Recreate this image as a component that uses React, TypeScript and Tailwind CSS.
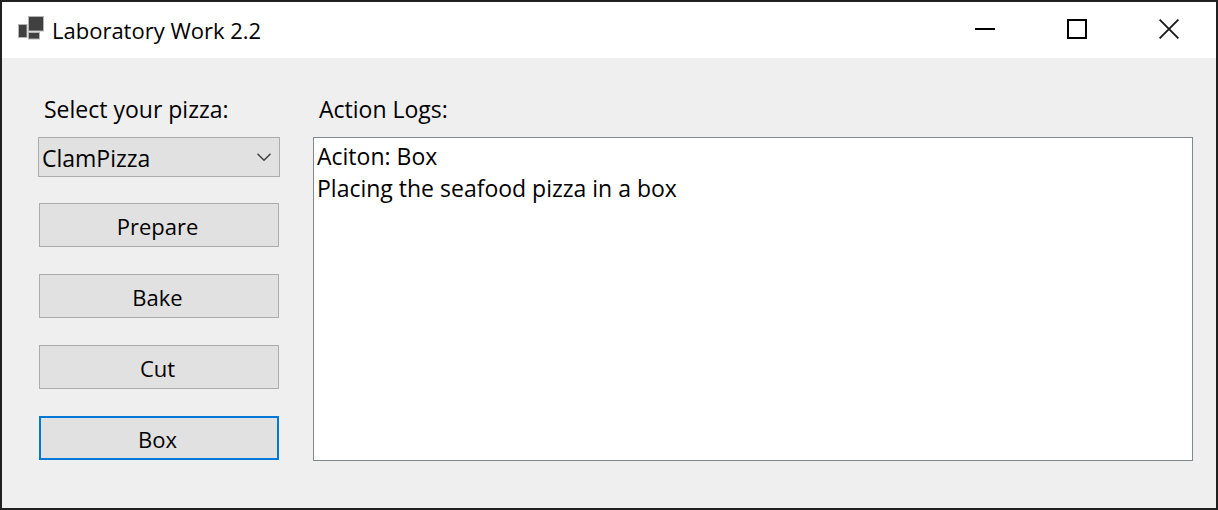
import { useState } from "react";

const actions = ["Prepare", "Bake", "Cut", "Box"] as const;
type Action = (typeof actions)[number];

const pizzas = [
  { name: "ClamPizza", kind: "seafood" },
  { name: "CheesePizza", kind: "cheese" },
  { name: "VeggiePizza", kind: "veggie" },
  { name: "PepperoniPizza", kind: "pepperoni" },
];

function describe(action: Action, kind: string) {
  switch (action) {
    case "Prepare":
      return `Preparing the ${kind} pizza`;
    case "Bake":
      return `Baking the ${kind} pizza`;
    case "Cut":
      return `Cutting the ${kind} pizza`;
    case "Box":
      return `Placing the ${kind} pizza in a box`;
  }
}

function AppIcon() {
  return (
    <svg width="26" height="24" viewBox="0 0 26 24" className="mb-1" aria-hidden="true">
      <g fill="#404040" stroke="#b4b4b4" strokeWidth="1">
        <rect x="10.5" y="0.5" width="15" height="14.5" />
        <rect x="0.5" y="8.5" width="8.5" height="13" />
        <rect x="10.5" y="16.5" width="11" height="6.5" />
      </g>
    </svg>
  );
}

function TitleBar() {
  const control = "flex h-14 w-[92px] items-center justify-center pb-0.5 hover:bg-[#e5e5e5]";
  return (
    <header className="flex h-14 items-center bg-white pr-px pl-4">
      <AppIcon />
      <h1 className="ml-2 flex-1 text-[22px] leading-8 font-normal">Laboratory Work 2.2</h1>
      <button type="button" aria-label="Minimize" className={control}>
        <svg width="20" height="20" viewBox="0 0 20 20">
          <path d="M0 10h20" stroke="#000" strokeWidth="2" />
        </svg>
      </button>
      <button type="button" aria-label="Maximize" className={control}>
        <svg width="20" height="20" viewBox="0 0 20 20">
          <rect x="1" y="1" width="18" height="18" fill="none" stroke="#000" strokeWidth="2" />
        </svg>
      </button>
      <button type="button" aria-label="Close" className={control}>
        <svg width="20" height="20" viewBox="0 0 20 20">
          <path d="M0.6 0.6l18.8 18.8M19.4 0.6L0.6 19.4" stroke="#1a1a1a" strokeWidth="1.9" />
        </svg>
      </button>
    </header>
  );
}

export default function App() {
  const [pizza, setPizza] = useState("ClamPizza");
  const [active, setActive] = useState<Action>("Box");
  const [log, setLog] = useState("Aciton: Box\nPlacing the seafood pizza in a box");

  const run = (action: Action) => {
    const kind = pizzas.find((p) => p.name === pizza)?.kind ?? "";
    setActive(action);
    setLog(`Aciton: ${action}\n${describe(action, kind)}`);
  };

  return (
    <div className="flex min-h-screen flex-col border-2 border-[#202020] bg-[#efefef] font-['Open_Sans','Noto_Sans',sans-serif] text-[23px] leading-8 text-black">
      <TitleBar />
      <main className="flex flex-1 gap-[33px] pt-[35px] pr-[23px] pb-[47px] pl-9">
        <section className="flex w-[242px] shrink-0 flex-col">
          <label htmlFor="pizza" className="mb-3 pl-1.5">
            Select your pizza:
          </label>
          <div className="relative">
            <select
              id="pizza"
              value={pizza}
              onChange={(e) => setPizza(e.target.value)}
              className="block h-10 w-full appearance-none border border-[#acacac] bg-[#e1e1e1] pt-0.5 pr-8 pl-[3px] leading-8 outline-none"
            >
              {pizzas.map((p) => (
                <option key={p.name}>{p.name}</option>
              ))}
            </select>
            <svg
              className="pointer-events-none absolute top-4 right-[9px]"
              width="14"
              height="9"
              viewBox="0 0 14 9"
              aria-hidden="true"
            >
              <path d="M0.5 0.8L7 7.3L13.5 0.8" fill="none" stroke="#404040" strokeWidth="1.5" />
            </svg>
          </div>
          <div className="mt-[26px] flex flex-col gap-[27px] px-px">
            {actions.map((action) => (
              <button
                key={action}
                type="button"
                onClick={() => run(action)}
                className={
                  action === active
                    ? "h-11 border-2 border-[#0078d7] bg-[#e1e1e1] pt-0.5 pr-[3px] text-[22px] outline-none"
                    : "h-11 border border-[#acacac] bg-[#e1e1e1] pt-0.5 pr-[3px] text-[22px] outline-none"
                }
              >
                {action}
              </button>
            ))}
          </div>
        </section>
        <section className="flex min-w-0 flex-1 flex-col">
          <label htmlFor="log" className="mb-3 pl-1.5">
            Action Logs:
          </label>
          <textarea
            id="log"
            readOnly
            value={log}
            className="w-full flex-1 resize-none border border-[#828790] bg-white px-[3px] py-0.5 outline-none"
          />
        </section>
      </main>
    </div>
  );
}
